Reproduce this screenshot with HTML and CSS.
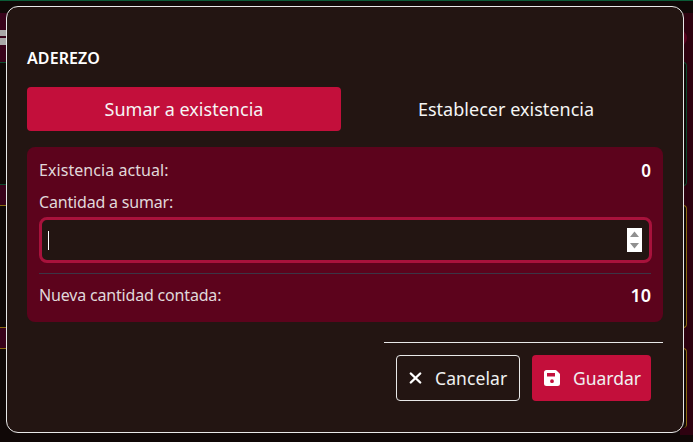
FILE: index.html
```html
<!DOCTYPE html>
<html lang="es">
<head>
<meta charset="utf-8">
<title>Aderezo</title>
<link rel="stylesheet" href="styles.css">
</head>
<body>
<div class="backdrop">
  <div class="bg-top"></div>
  <div class="bg-strip"></div>
  <div class="bg-dot"></div>
  <div class="bg-card bg-l1"></div>
  <div class="bg-shape bg-shape-a"></div>
  <div class="bg-shape bg-shape-b"></div>
  <div class="bg-card bg-l2"></div>
  <div class="bg-card bg-l3"></div>
  <div class="bg-frame bg-r1"></div>
  <div class="bg-frame bg-r2"></div>
  <div class="bg-frame bg-r3"></div>
</div>
<main class="modal">
  <h2 class="title">ADEREZO</h2>
  <div class="tabs">
    <button class="tab tab-active">Sumar a existencia</button>
    <button class="tab">Establecer existencia</button>
  </div>
  <section class="panel">
    <div class="row"><span>Existencia actual:</span><strong>0</strong></div>
    <label class="field-label">Cantidad a sumar:</label>
    <div class="input">
      <span class="caret"></span>
      <span class="spinner">
        <svg viewBox="0 0 15 24" width="15" height="24"><path d="M7.500 3.500 12 9H3z" fill="#8f8f8f"/><path d="M3 15h9l-4.500 5.500z" fill="#8f8f8f"/></svg>
      </span>
    </div>
    <div class="divider"></div>
    <div class="row row-total"><span>Nueva cantidad contada:</span><strong>10</strong></div>
  </section>
  <footer class="footer">
    <button class="btn btn-outline">
      <svg viewBox="0 0 14 14" width="14" height="14"><path d="M1.800 2.500l9.400 9m0-9l-9.400 9" stroke="#fff" stroke-width="2.400" stroke-linecap="round" fill="none"/></svg>
      Cancelar
    </button>
    <button class="btn btn-primary">
      <svg viewBox="0 0 16 16" width="16" height="16"><path fill-rule="evenodd" d="M2.500 0H11.500a1.500 1.500 0 0 1 1 .4L15.600 3.500a1.500 1.500 0 0 1 .4 1v9a2.500 2.500 0 0 1-2.500 2.500h-11A2.500 2.500 0 0 1 0 13.500v-11A2.500 2.500 0 0 1 2.500 0zM3 3v3.500h8V3zM8 9.300a1.900 1.900 0 1 0 0 3.800A1.900 1.900 0 0 0 8 9.300z" fill="#fff"/></svg>
      Guardar
    </button>
  </footer>
</main>
</body>
</html>
```
FILE: styles.css
```css
* { box-sizing: border-box; }
html, body { margin: 0; height: 100%; }
body {
  width: 693px;
  height: 442px;
  overflow: hidden;
  background: #100807;
  font-family: "Noto Sans", sans-serif;
  color: #fff;
  padding: 6px 9px 9px 6px;
  position: relative;
}
.backdrop { position: absolute; inset: 0; overflow: hidden; }
.bg-top { position: absolute; left: 0; right: 0; top: 0; height: 1px; background: #0b5a36; }
.bg-strip { position: absolute; left: 680px; width: 13px; top: 13px; height: 422px; background: #2e0210; }
.bg-dot { position: absolute; left: 669px; top: 29px; width: 18px; height: 18px; border-radius: 50%; background: #5a0420; }
.bg-card { position: absolute; left: 0; width: 8px; background: #38021a; }
.bg-l1 { top: 13px; height: 50px; border-bottom: 1px solid #0b4a2d; }
.bg-l2 { top: 184px; height: 22px; border-top: 1px solid #0b4a2d; border-bottom: 1px solid #8a6a10; }
.bg-l3 { top: 327px; height: 22px; border-top: 1px solid #8a6a10; border-bottom: 1px solid #8a6a10; }
.bg-shape { position: absolute; left: 0; width: 7px; background: #a8a8a8; }
.bg-shape-a { top: 30px; height: 6px; }
.bg-shape-b { top: 38px; height: 7px; }
.bg-frame { position: absolute; left: 676px; width: 11px; background: #100807; border-radius: 0 4px 4px 0; }
.bg-r1 { top: 62px; height: 124px; border-right: 1px solid #0b4a2d; border-top: 1px solid #0b4a2d; border-bottom: 1px solid #0b4a2d; }
.bg-r2 { top: 205px; height: 123px; border-right: 1px solid #8a6a10; border-top: 1px solid #8a6a10; border-bottom: 1px solid #8a6a10; }
.bg-r3 { top: 348px; height: 80px; border-right: 1px solid #8a6a10; border-top: 1px solid #8a6a10; }
.modal {
  position: relative;
  width: 678px;
  height: 427px;
  background: #231512;
  border: 1px solid #e8e8e8;
  border-radius: 12px;
  padding: 40px 20px 0;
  display: flex;
  flex-direction: column;
}
.title { margin: 0; font-size: 16px; line-height: 22px; font-weight: 600; letter-spacing: .1px; }
.tabs { display: flex; gap: 8px; margin-top: 18px; }
.tab {
  flex: 1;
  height: 44px;
  border: 0;
  border-radius: 4px;
  background: transparent;
  color: #f5f5f5;
  font: 400 18px "Noto Sans", sans-serif;
  letter-spacing: .02px;
}
.tab-active { background: #c30f3b; }
.panel {
  margin-top: 16px;
  height: 175px;
  background: #5c031c;
  border-radius: 8px;
  padding: 12px;
  display: flex;
  flex-direction: column;
}
.row {
  display: flex;
  justify-content: space-between;
  align-items: center;
  height: 22px;
  font-size: 16px;
  color: #e0d8da;
}
.row > span { letter-spacing: .06px; }
.row strong { color: #fff; font-size: 17px; font-weight: 600; }
.field-label { margin-top: 10px; height: 22px; line-height: 22px; font-size: 16px; color: #e0d8da; letter-spacing: -.18px; }
.input {
  margin-top: 4px;
  height: 46px;
  background: #231512;
  border: 3px solid #a8123c;
  border-radius: 8px;
  display: flex;
  align-items: center;
  justify-content: space-between;
  padding: 0 7px 0 6px;
  margin-right: -1px;
}
.caret { width: 1px; height: 19px; background: #fff; }
.spinner { width: 15px; height: 24px; background: #fff; display: block; }
.spinner svg { display: block; }
.divider { margin-top: 10px; height: 1px; background: #3b3545; }
.row-total { margin-top: 10px; }
.row-total > span { letter-spacing: -.18px; }
.row-total strong { font-size: 18px; }
.footer {
  margin-top: 20px;
  margin-left: 357px;
  border-top: 1px solid #e8e8e8;
  padding: 12px 12px 0;
  display: flex;
  justify-content: flex-end;
  gap: 12px;
}
.btn {
  height: 46px;
  border-radius: 4px;
  display: flex;
  align-items: center;
  gap: 12px;
  font: 400 17.500px "Noto Sans", sans-serif;
  color: #f0f0f0;
  background: transparent;
  padding: 0 12px;
  white-space: nowrap;
}
.btn svg { flex: none; }
.btn-outline { width: 124px; border: 1px solid #e8e8e8; letter-spacing: .1px; }
.btn-primary { width: 119px; border: 0; background: #c30f3b; gap: 13px; }
```
